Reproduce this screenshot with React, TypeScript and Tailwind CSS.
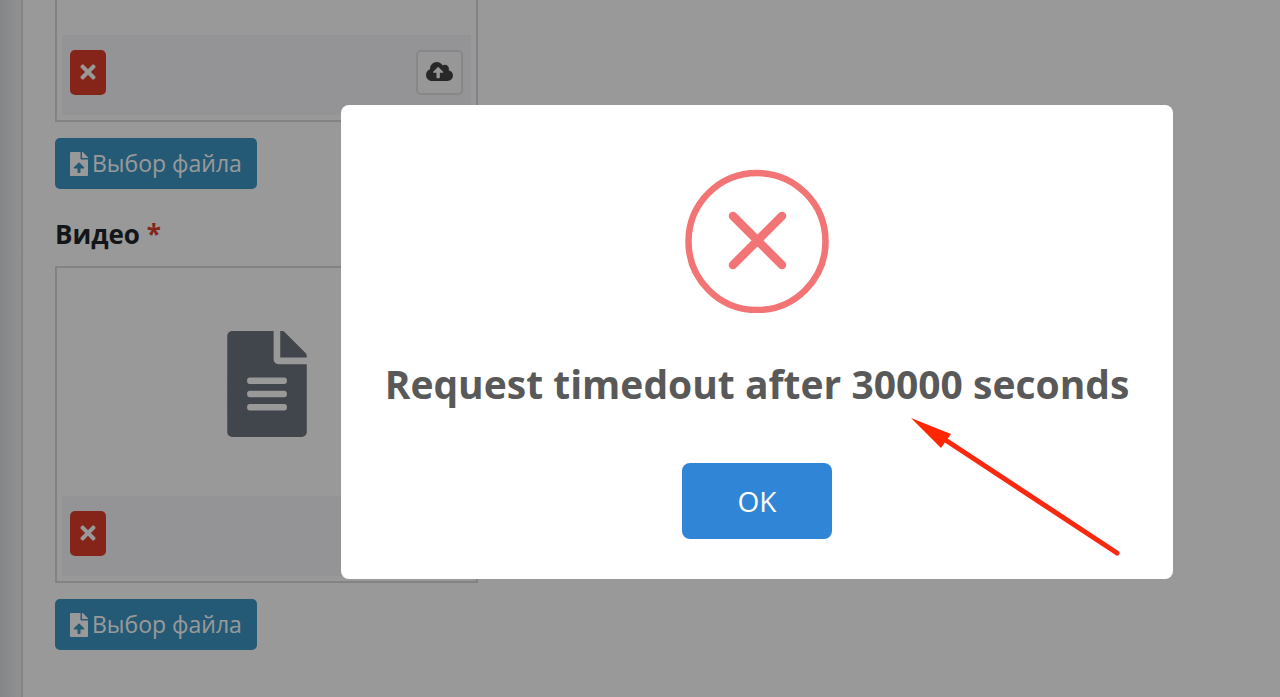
import { useState } from "react";
import { FaCloudUploadAlt, FaFileAlt, FaFileUpload, FaTimes } from "react-icons/fa";

function PreviewFooter({ withUpload = false }: { withUpload?: boolean }) {
  return (
    <div className="flex h-20 items-start justify-between bg-[#f7f7fb] px-2 pt-[15px]">
      <button
        type="button"
        aria-label="Удалить"
        className="flex h-[45px] w-9 items-center justify-center rounded-[5px] bg-[#de3f2c] pr-px pb-[2px] text-white"
      >
        <FaTimes className="size-[22px]" />
      </button>
      {withUpload && (
        <button
          type="button"
          aria-label="Загрузить"
          className="flex h-[45px] w-[47px] items-center justify-center rounded-[5px] border-2 border-[#e0e1e5] bg-[#fcfcfd] pb-[2px] text-[#444]"
        >
          <FaCloudUploadAlt className="size-[27px]" />
        </button>
      )}
    </div>
  );
}

function ChooseFile() {
  return (
    <button
      type="button"
      className="mt-4 flex h-[51px] items-center gap-1 rounded-[5px] bg-[#3c96c4] px-[15px] text-[23px] text-white"
    >
      <FaFileUpload className="h-6 w-[18px]" />
      <span>Выбор файла</span>
    </button>
  );
}

function ErrorDialog({ onClose }: { onClose: () => void }) {
  return (
    <div className="fixed inset-0 flex items-start justify-center bg-black/40 pt-[105px] pl-[234px]">
      <div
        role="alertdialog"
        aria-labelledby="dialog-title"
        className="relative flex w-[832px] flex-col items-center rounded-lg bg-white px-10 pt-16 pb-10"
      >
        <svg viewBox="0 0 144 144" className="size-36" fill="none" stroke="#f27474" aria-hidden="true">
          <circle cx="72" cy="72.5" r="68.5" strokeWidth="6.5" />
          <path d="M48 47 97 96M97 47 48 96" strokeWidth="8.5" strokeLinecap="round" />
        </svg>
        <h2
          id="dialog-title"
          className="mt-11 text-center text-[39px] leading-[54px] font-bold whitespace-nowrap text-[#595959]"
        >
          Request timedout after 30000 seconds
        </h2>
        <button
          type="button"
          onClick={onClose}
          className="mt-[52px] h-[76px] w-[150px] rounded-lg bg-[#3085d6] text-[28px] text-white"
        >
          OK
        </button>
        <svg
          viewBox="0 0 212 142"
          className="absolute top-[311px] right-[50px] h-[142px] w-[212px]"
          aria-hidden="true"
        >
          <path d="M36 25 206 137" stroke="#f9280f" strokeWidth="5" strokeLinecap="round" />
          <path d="M0 2 40 18 30 32Z" fill="#ff2600" />
        </svg>
      </div>
    </div>
  );
}

export default function App() {
  const [open, setOpen] = useState(true);
  return (
    <div className="flex min-h-screen bg-white font-['Open_Sans',sans-serif]">
      <aside className="w-[21px] shrink-0 bg-linear-to-r from-[#dcdfe3] to-[#f3f3f4]" />
      <main className="min-w-0 flex-1 border-l-2 border-[#dcdcde] pb-[46px] pl-8">
        <section className="flex flex-col items-start">
          <div className="w-[423px] max-w-full border-2 border-t-0 border-[#dadbdd] px-[5px] pt-[35px] pb-[5px]">
            <PreviewFooter withUpload />
          </div>
          <ChooseFile />
        </section>
        <section className="flex flex-col items-start pt-[25px]">
          <h3 className="text-[26px] leading-10 font-bold text-[#212529]">
            Видео <span className="text-[#de3f2c]">*</span>
          </h3>
          <div className="mt-3 w-[423px] max-w-full border-2 border-[#dadbdd] px-[5px] pb-[5px]">
            <div className="flex h-[228px] items-center justify-center pt-1">
              <FaFileAlt className="h-[106px] w-20 text-[#6c757d]" />
            </div>
            <PreviewFooter withUpload />
          </div>
          <ChooseFile />
        </section>
      </main>
      {open && <ErrorDialog onClose={() => setOpen(false)} />}
    </div>
  );
}
